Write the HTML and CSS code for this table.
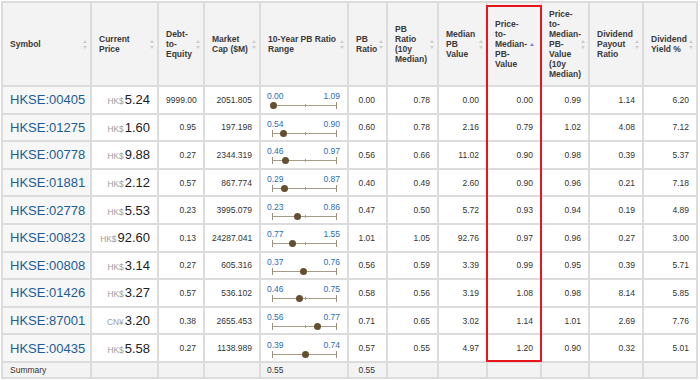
FILE: index.html
```html
<!DOCTYPE html>
<html lang="en">
<head>
    <meta charset="UTF-8">
    <meta name="viewport" content="width=device-width, initial-scale=1.0">
    <title>HKSE PB Screener</title>
    <link rel="stylesheet" href="styles.css">
</head>

<body>
    <div class="screen">
        <table class="stocks">
            <colgroup>
                <col style="width: 89px"><col style="width: 67px"><col style="width: 46px"><col style="width: 56px">
                <col style="width: 88px"><col style="width: 39px"><col style="width: 51px"><col style="width: 49px">
                <col style="width: 54px"><col style="width: 48px"><col style="width: 54px"><col style="width: 54px">
            </colgroup>
            <thead>
                <tr>
                    <th><div class="head"><span>Symbol</span><i class="sort"></i></div></th>
                    <th><div class="head"><span>Current<br>Price</span><i class="sort"></i></div></th>
                    <th><div class="head"><span>Debt-<br>to-<br>Equity</span><i class="sort"></i></div></th>
                    <th><div class="head"><span>Market<br>Cap ($M)</span><i class="sort"></i></div></th>
                    <th><div class="head"><span>10-Year PB Ratio<br>Range</span><i class="sort"></i></div></th>
                    <th><div class="head"><span>PB<br>Ratio</span><i class="sort"></i></div></th>
                    <th><div class="head"><span>PB<br>Ratio<br>(10y<br>Median)</span><i class="sort"></i></div></th>
                    <th><div class="head"><span>Median<br>PB<br>Value</span><i class="sort"></i></div></th>
                    <th><div class="head"><span>Price-<br>to-<br>Median-<br>PB-<br>Value</span><i class="sort asc"></i></div></th>
                    <th><div class="head"><span>Price-<br>to-<br>Median-<br>PB-<br>Value<br>(10y<br>Median)</span><i class="sort"></i></div></th>
                    <th><div class="head"><span>Dividend<br>Payout<br>Ratio</span><i class="sort"></i></div></th>
                    <th><div class="head"><span>Dividend<br>Yield %</span><i class="sort"></i></div></th>
                </tr>
            </thead>
            <tbody>
                <tr>
                    <td class="sym">HKSE:00405</td>
                    <td class="price"><span class="cur">HK$</span>5.24</td>
                    <td class="num">9999.00</td>
                    <td class="num">2051.805</td>
                    <td class="range"><div class="labels"><span>0.00</span><span>1.09</span></div><div class="bar"><b class="dot" style="left: 0%"></b></div></td>
                    <td class="num pb">0.00</td>
                    <td class="num">0.78</td>
                    <td class="num">0.00</td>
                    <td class="num">0.00</td>
                    <td class="num">0.99</td>
                    <td class="num">1.14</td>
                    <td class="num">6.20</td>
                </tr>
                <tr>
                    <td class="sym">HKSE:01275</td>
                    <td class="price"><span class="cur">HK$</span>1.60</td>
                    <td class="num">0.95</td>
                    <td class="num">197.198</td>
                    <td class="range"><div class="labels"><span>0.54</span><span>0.90</span></div><div class="bar"><b class="dot" style="left: 16.7%"></b></div></td>
                    <td class="num pb">0.60</td>
                    <td class="num">0.78</td>
                    <td class="num">2.16</td>
                    <td class="num">0.79</td>
                    <td class="num">1.02</td>
                    <td class="num">4.08</td>
                    <td class="num">7.12</td>
                </tr>
                <tr>
                    <td class="sym">HKSE:00778</td>
                    <td class="price"><span class="cur">HK$</span>9.88</td>
                    <td class="num">0.27</td>
                    <td class="num">2344.319</td>
                    <td class="range"><div class="labels"><span>0.46</span><span>0.97</span></div><div class="bar"><b class="dot" style="left: 19.6%"></b></div></td>
                    <td class="num pb">0.56</td>
                    <td class="num">0.66</td>
                    <td class="num">11.02</td>
                    <td class="num">0.90</td>
                    <td class="num">0.98</td>
                    <td class="num">0.39</td>
                    <td class="num">5.37</td>
                </tr>
                <tr>
                    <td class="sym">HKSE:01881</td>
                    <td class="price"><span class="cur">HK$</span>2.12</td>
                    <td class="num">0.57</td>
                    <td class="num">867.774</td>
                    <td class="range"><div class="labels"><span>0.29</span><span>0.87</span></div><div class="bar"><b class="dot" style="left: 19%"></b></div></td>
                    <td class="num pb">0.40</td>
                    <td class="num">0.49</td>
                    <td class="num">2.60</td>
                    <td class="num">0.90</td>
                    <td class="num">0.96</td>
                    <td class="num">0.21</td>
                    <td class="num">7.18</td>
                </tr>
                <tr>
                    <td class="sym">HKSE:02778</td>
                    <td class="price"><span class="cur">HK$</span>5.53</td>
                    <td class="num">0.23</td>
                    <td class="num">3995.079</td>
                    <td class="range"><div class="labels"><span>0.23</span><span>0.86</span></div><div class="bar"><b class="dot" style="left: 38.1%"></b></div></td>
                    <td class="num pb">0.47</td>
                    <td class="num">0.50</td>
                    <td class="num">5.72</td>
                    <td class="num">0.93</td>
                    <td class="num">0.94</td>
                    <td class="num">0.19</td>
                    <td class="num">4.89</td>
                </tr>
                <tr>
                    <td class="sym">HKSE:00823</td>
                    <td class="price"><span class="cur">HK$</span>92.60</td>
                    <td class="num">0.13</td>
                    <td class="num">24287.041</td>
                    <td class="range"><div class="labels"><span>0.77</span><span>1.55</span></div><div class="bar"><b class="dot" style="left: 30.8%"></b></div></td>
                    <td class="num pb">1.01</td>
                    <td class="num">1.05</td>
                    <td class="num">92.76</td>
                    <td class="num">0.97</td>
                    <td class="num">0.96</td>
                    <td class="num">0.27</td>
                    <td class="num">3.00</td>
                </tr>
                <tr>
                    <td class="sym">HKSE:00808</td>
                    <td class="price"><span class="cur">HK$</span>3.14</td>
                    <td class="num">0.27</td>
                    <td class="num">605.316</td>
                    <td class="range"><div class="labels"><span>0.37</span><span>0.76</span></div><div class="bar"><b class="dot" style="left: 48.7%"></b></div></td>
                    <td class="num pb">0.56</td>
                    <td class="num">0.59</td>
                    <td class="num">3.39</td>
                    <td class="num">0.99</td>
                    <td class="num">0.95</td>
                    <td class="num">0.39</td>
                    <td class="num">5.71</td>
                </tr>
                <tr>
                    <td class="sym">HKSE:01426</td>
                    <td class="price"><span class="cur">HK$</span>3.27</td>
                    <td class="num">0.57</td>
                    <td class="num">536.102</td>
                    <td class="range"><div class="labels"><span>0.46</span><span>0.75</span></div><div class="bar"><b class="dot" style="left: 41.4%"></b></div></td>
                    <td class="num pb">0.58</td>
                    <td class="num">0.56</td>
                    <td class="num">3.19</td>
                    <td class="num">1.08</td>
                    <td class="num">0.98</td>
                    <td class="num">8.14</td>
                    <td class="num">5.85</td>
                </tr>
                <tr>
                    <td class="sym">HKSE:87001</td>
                    <td class="price"><span class="cur">CN¥</span>3.20</td>
                    <td class="num">0.38</td>
                    <td class="num">2655.453</td>
                    <td class="range"><div class="labels"><span>0.56</span><span>0.77</span></div><div class="bar"><b class="dot" style="left: 71.4%"></b></div></td>
                    <td class="num pb">0.71</td>
                    <td class="num">0.65</td>
                    <td class="num">3.02</td>
                    <td class="num">1.14</td>
                    <td class="num">1.01</td>
                    <td class="num">2.69</td>
                    <td class="num">7.76</td>
                </tr>
                <tr>
                    <td class="sym">HKSE:00435</td>
                    <td class="price"><span class="cur">HK$</span>5.58</td>
                    <td class="num">0.27</td>
                    <td class="num">1138.989</td>
                    <td class="range"><div class="labels"><span>0.39</span><span>0.74</span></div><div class="bar"><b class="dot" style="left: 51.4%"></b></div></td>
                    <td class="num pb">0.57</td>
                    <td class="num">0.55</td>
                    <td class="num">4.97</td>
                    <td class="num">1.20</td>
                    <td class="num">0.90</td>
                    <td class="num">0.32</td>
                    <td class="num">5.01</td>
                </tr>
            </tbody>
            <tfoot>
                <tr>
                    <td>Summary</td>
                    <td></td>
                    <td></td>
                    <td></td>
                    <td class="range-sum">0.55</td>
                    <td class="num pb">0.55</td>
                    <td></td>
                    <td></td>
                    <td></td>
                    <td></td>
                    <td></td>
                    <td></td>
                </tr>
            </tfoot>
        </table>

        <!-- marks the sorted column -->
        <div class="highlight"></div>
    </div>
</body>
</html>
```

FILE: styles.css
```css
body {
    margin: 0;
    padding: 1px 0 0 1px;
    font-family: "Liberation Sans", Arial, sans-serif;
    color: #333;
    background: #fff;
}

.screen {
    position: relative;
    width: 697px;
}

.stocks {
    width: 697px;
    border-collapse: collapse;
    table-layout: fixed;
}

.stocks th,
.stocks td {
    border: 2px solid #dcdcdc;
    font-size: 8.5px;
    padding: 0 7px;
    white-space: nowrap;
}

.stocks th {
    height: 82px;
    background: #f3f3f3;
    font-weight: bold;
    text-align: left;
    line-height: 10px;
    padding: 0 3px 0 7px;
    color: #3a3a3a;
}

.head {
    display: flex;
    align-items: center;
    justify-content: space-between;
}

.sort {
    display: flex;
    flex-direction: column;
    justify-content: space-between;
    height: 9px;
}

.sort::before,
.sort::after {
    content: "";
    border-left: 2.5px solid transparent;
    border-right: 2.5px solid transparent;
}

.sort::before {
    border-bottom: 3.5px solid #cdcdcd;
}

.sort::after {
    border-top: 3.5px solid #cdcdcd;
}

.sort.asc {
    height: auto;
    margin-right: 3px;
}

.sort.asc::before {
    border-bottom-color: #7c80e0;
}

.sort.asc::after {
    display: none;
}

.stocks tbody tr {
    height: 27.6px;
}

.sym {
    background: #f7f7f7;
    color: #1d5c95;
    font-size: 13px !important;
}

.price {
    text-align: right;
    font-size: 13px !important;
    color: #222;
}

.cur {
    font-size: 8.4px;
    color: #9d9d9d;
    margin-right: 1px;
}

.num {
    text-align: right;
}

.pb {
    padding-right: 11px !important;
}

.range {
    padding: 1px 7px 0 6px !important;
}

.labels {
    display: flex;
    justify-content: space-between;
    line-height: 10px;
    color: #2c6db5;
}

.bar {
    position: relative;
    height: 7px;
    margin: 1px 3px 0 5px;
    border-left: 1px solid #9d907c;
    border-right: 1px solid #9d907c;
}

.bar::before {
    content: "";
    position: absolute;
    left: 0;
    right: 0;
    top: 3px;
    height: 1px;
    background: #a89b86;
}

.bar::after {
    content: "";
    position: absolute;
    left: 50%;
    top: 2px;
    width: 1px;
    height: 3px;
    background: #a89b86;
}

.dot {
    position: absolute;
    top: 0;
    width: 7px;
    height: 7px;
    margin-left: -3.5px;
    border-radius: 50%;
    background: #654f31;
    z-index: 1;
}

.stocks tfoot tr {
    height: 16px;
}

.stocks tfoot td {
    background: #f3f3f3;
    line-height: 10px;
}

.range-sum {
    padding-left: 6px !important;
}

.highlight {
    position: absolute;
    left: 485px;
    top: 4px;
    width: 52px;
    height: 353px;
    border: 2px solid #e8161b;
    pointer-events: none;
}
```
